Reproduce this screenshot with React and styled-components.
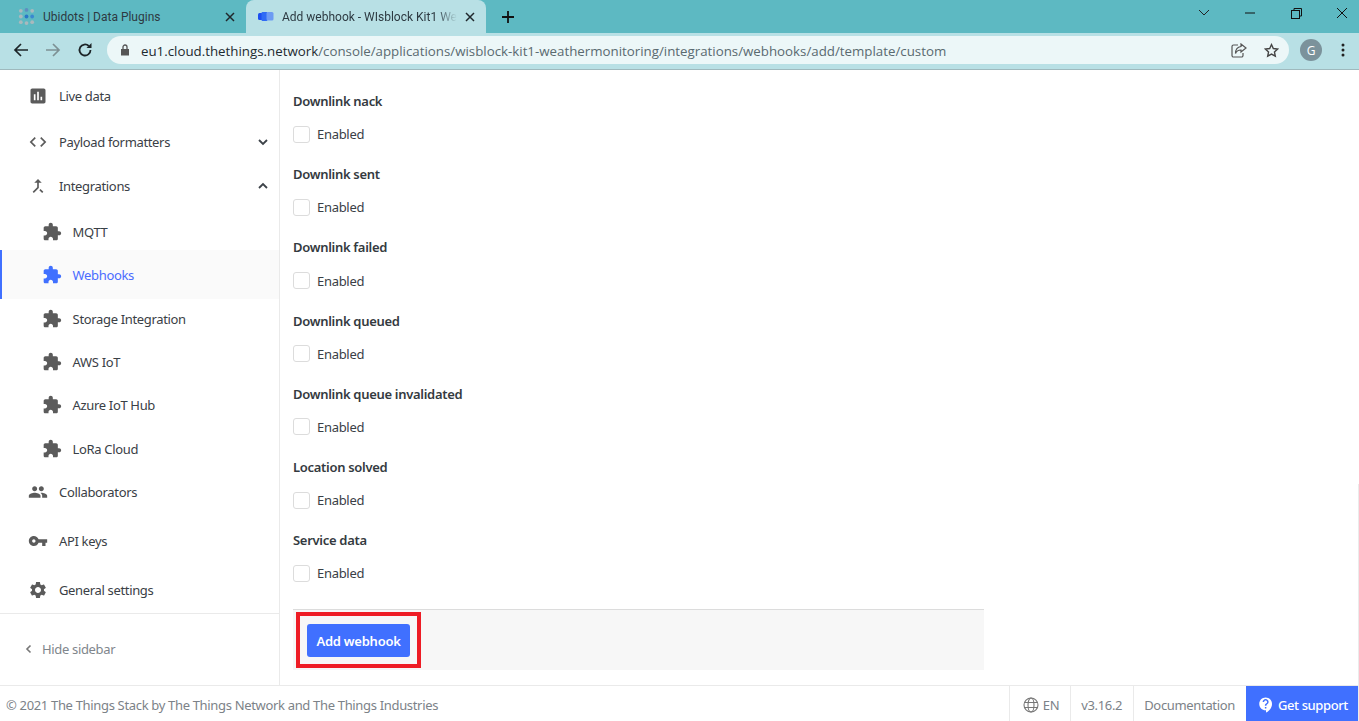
import React from 'react';
import styled, { createGlobalStyle } from 'styled-components';

const Global = createGlobalStyle`
  html, body { margin: 0; padding: 0; background: #fff; overflow: hidden; }
  * { box-sizing: border-box; }
`;
const UI = `"Source Sans Pro", "Noto Sans", sans-serif`;
const Page = styled.div`position:relative;width:1359px;height:721px;display:flex;flex-direction:column;overflow:hidden;font-family:${UI};`;
const ScrollSliver = styled.div`position:absolute;right:0;top:484px;bottom:0;width:1px;background:#ebebeb;`;

const TabStrip = styled.div`height:33px;background:#5db9c2;display:flex;align-items:stretch;flex:none;font-family:Roboto,sans-serif;`;
const Tab = styled.div`
  width:${p=>p.$w}px;margin-left:${p=>p.$ml||0}px;display:flex;align-items:center;padding:0 11px 0 ${p=>p.$pl}px;gap:8px;
  background:${p=>p.$active?'#b8e0e5':'transparent'};border-radius:8px 8px 0 0;font-size:12px;color:#2d3a42;
`;
const TabTitle = styled.span`flex:1;white-space:nowrap;overflow:hidden;${p=>p.$fade&&'mask-image:linear-gradient(90deg,#000 88%,transparent 100%);'}`;
const NewTab = styled.div`width:44px;display:flex;align-items:center;justify-content:center;`;
const Spacer = styled.div`flex:1;`;
const WinBtn = styled.div`width:${p=>p.$w||46}px;margin-left:${p=>p.$ml||0}px;display:flex;align-items:center;justify-content:center;padding-bottom:7px;`;

const Toolbar = styled.div`height:37px;background:#b8e0e5;border-bottom:1px solid #9fb9bd;display:flex;align-items:center;flex:none;padding:0 0 2px 0;`;
const NavBtn = styled.div`width:32px;display:flex;justify-content:center;align-items:center;margin-left:${p=>p.$ml||0}px;`;
const Omnibox = styled.div`width:1182px;height:28px;margin-left:6px;border-radius:14px;background:#ecf7f8;display:flex;align-items:center;padding:0 10px 0 13px;`;
const UrlText = styled.span`flex:1;margin-left:11px;padding-top:1px;font:13.31px "Open Sans",sans-serif;color:#5a6a70;white-space:nowrap;b{font-weight:400;color:#1d2a30;}`;
const OmniIcon = styled.div`display:flex;margin-left:${p=>p.$ml||0}px;`;
const Avatar = styled.div`width:22px;height:22px;border-radius:50%;background:#7b929b;color:#fff;font:12px "Open Sans",sans-serif;display:flex;align-items:center;justify-content:center;margin-left:11px;`;
const Kebab = styled.div`margin-left:19px;display:flex;`;

const Body = styled.div`flex:1;display:flex;min-height:0;`;
const Sidebar = styled.nav`width:280px;flex:none;border-right:1px solid #eaeaea;display:flex;flex-direction:column;padding-top:2px;`;
const Item = styled.div`
  height:${p=>p.$h}px;display:flex;align-items:center;padding:0 9px 0 ${p=>p.$sub?42:28}px;
  font-size:13px;letter-spacing:-.34px;color:${p=>p.$active?'#4a6cff':'#3a4046'};
  background:${p=>p.$active?'#fafafa':'transparent'};
  border-left:${p=>p.$active?'2px solid #4070ff':'0'};
  ${p=>p.$active&&'padding-left:40px;'}
  margin-top:${p=>p.$mt||0}px;
`;
const ItemIcon = styled.svg`width:${p=>p.$s||20}px;height:${p=>p.$s||20}px;flex:none;fill:${p=>p.$c||'#5b5b5b'};margin-right:${p=>p.$mr??10.6}px;`;
const Caret = styled.svg`margin-left:auto;width:14px;height:14px;fill:none;stroke:#3c4248;stroke-width:1.8;`;
const SideFoot = styled.div`margin-top:4px;border-top:1px solid #eaeaea;height:70px;display:flex;align-items:center;padding-left:24px;gap:9px;color:#80868c;font-size:13px;letter-spacing:-.34px;`;

const Main = styled.main`flex:1;padding:0 0 0 13px;min-width:0;`;
const Form = styled.div`width:691px;padding-top:19px;`;
const Group = styled.div`height:${p=>p.$h||73.2}px;color:#3a4046;font-size:13px;letter-spacing:-.3px;`;
const GroupLabel = styled.div`height:24px;line-height:24px;font-weight:600;color:#343a40;`;
const Check = styled.label`display:flex;align-items:center;gap:7px;margin-top:12.2px;height:18px;`;
const Box = styled.span`width:17px;height:17px;border:1px solid #dcdcdc;border-radius:3px;background:#fff;`;
const SubmitBar = styled.div`height:61px;background:#f7f7f7;border-top:1px solid #dcdcdc;padding:2px 0 0 3px;`;
const Annotation = styled.div`display:inline-block;border:4px solid #ee1c25;padding:8px 7px 7px;`;
const Button = styled.button`display:block;width:103px;height:33px;background:#4070ff;color:#fff;border:0;border-radius:3px;font:600 13px ${UI};letter-spacing:-.25px;padding:2px 0 0;`;

const Footer = styled.footer`height:36px;flex:none;border-top:1px solid #eaeaea;display:flex;align-items:stretch;color:#7c8288;font-size:13px;letter-spacing:-.33px;`;
const Copy = styled.div`flex:1;display:flex;align-items:center;padding:2px 0 0 6px;`;
const FootCell = styled.div`display:flex;align-items:center;gap:4px;padding:2px ${p=>p.$pr||10}px 0 ${p=>p.$pl||10}px;border-left:1px solid #eaeaea;`;
const Support = styled.div`width:113px;background:#4070ff;color:#fff;display:flex;align-items:center;padding:2px 0 0 11px;gap:3px;font-weight:500;white-space:nowrap;letter-spacing:-.4px;`;

const P = {
  live:'M19 3H5c-1.1 0-2 .9-2 2v14c0 1.1.9 2 2 2h14c1.1 0 2-.9 2-2V5c0-1.1-.9-2-2-2zM9 17H7v-7h2v7zm4 0h-2V7h2v10zm4 0h-2v-4h2v4z',
  code:'M9.4 16.6L4.8 12l4.6-4.6L8 6l-6 6 6 6 1.4-1.4zm5.2 0l4.6-4.6-4.6-4.6L16 6l6 6-6 6-1.4-1.4z',
  merge:'M17 20.41L18.41 19 15 15.59 13.59 17 17 20.41zM7.5 8H11v5.59L5.59 19 7 20.41l6-6V8h3.5L12 3.5 7.5 8z',
  ext:'M20.5 11H19V7c0-1.1-.9-2-2-2h-4V3.5C13 2.12 11.88 1 10.5 1S8 2.12 8 3.5V5H4c-1.1 0-1.99.9-1.99 2v3.8H3.5c1.49 0 2.7 1.21 2.7 2.7s-1.21 2.7-2.7 2.7H2V20c0 1.1.9 2 2 2h3.8v-1.5c0-1.49 1.21-2.7 2.7-2.7 1.49 0 2.7 1.21 2.7 2.7V22H17c1.1 0 2-.9 2-2v-4h1.5c1.38 0 2.5-1.12 2.5-2.5S21.88 11 20.5 11z',
  group:'M16 11c1.66 0 2.99-1.34 2.99-3S17.66 5 16 5c-1.66 0-3 1.34-3 3s1.34 3 3 3zm-8 0c1.66 0 2.99-1.34 2.99-3S9.66 5 8 5C6.34 5 5 6.34 5 8s1.34 3 3 3zm0 2c-2.33 0-7 1.17-7 3.5V19h14v-2.5c0-2.33-4.67-3.5-7-3.5zm8 0c-.29 0-.62.02-.97.05 1.16.84 1.97 1.97 1.97 3.45V19h6v-2.5c0-2.33-4.67-3.5-7-3.5z',
  key:'M12.65 10C11.83 7.67 9.61 6 7 6c-3.31 0-6 2.69-6 6s2.69 6 6 6c2.61 0 4.83-1.67 5.65-4H17v4h4v-4h2v-4H12.65zM7 14c-1.1 0-2-.9-2-2s.9-2 2-2 2 .9 2 2-.9 2-2 2z',
  gear:'M19.14 12.94c.04-.3.06-.61.06-.94 0-.32-.02-.64-.07-.94l2.03-1.58c.18-.14.23-.41.12-.61l-1.92-3.32c-.12-.22-.37-.29-.59-.22l-2.39.96c-.5-.38-1.03-.7-1.62-.94l-.36-2.54c-.04-.24-.24-.41-.48-.41h-3.84c-.24 0-.43.17-.47.41l-.36 2.54c-.59.24-1.13.57-1.62.94l-2.39-.96c-.22-.08-.47 0-.59.22L2.74 8.87c-.12.21-.08.47.12.61l2.03 1.58c-.05.3-.09.63-.09.94s.02.64.07.94l-2.03 1.58c-.18.14-.23.41-.12.61l1.92 3.32c.12.22.37.29.59.22l2.39-.96c.5.38 1.03.7 1.62.94l.36 2.54c.05.24.24.41.48.41h3.84c.24 0 .44-.17.47-.41l.36-2.54c.59-.24 1.13-.56 1.62-.94l2.39.96c.22.08.47 0 .59-.22l1.92-3.32c.12-.22.07-.47-.12-.61l-2.01-1.58zM12 15.6c-1.98 0-3.6-1.62-3.6-3.6s1.62-3.6 3.6-3.6 3.6 1.62 3.6 3.6-1.62 3.6-3.6 3.6z',
  help:'M11.5 2C6.81 2 3 5.81 3 10.5S6.81 19 11.5 19h.5v3c4.86-2.34 8-7 8-11.5C20 5.81 16.19 2 11.5 2zm1 14.5h-2v-2h2v2zm0-3.5h-2c0-3.25 3-3 3-5 0-1.1-.9-2-2-2s-2 .9-2 2h-2c0-2.21 1.79-4 4-4s4 1.79 4 4c0 2.5-3 2.75-3 5z',
};
const Icon = ({d,...r}) => <ItemIcon viewBox="0 0 24 24" {...r}><path d={d}/></ItemIcon>;
const Chev = ({up}) => <Caret viewBox="0 0 14 14"><path d={up?'M3 9l4-4 4 4':'M3 5l4 4 4-4'}/></Caret>;
const X = () => <svg width="10" height="10" viewBox="0 0 10 10" style={{flex:'none'}}><path d="M1 1l8 8M9 1l-8 8" stroke="#20282c" strokeWidth="1.5"/></svg>;

const sideTop = [
  {k:'Live data',d:P.live,h:48},
  {k:'Payload formatters',d:P.code,h:44,caret:'down'},
  {k:'Integrations',d:P.merge,h:44,caret:'up'},
];
const subs = [
  {k:'MQTT',h:36,mt:6},{k:'Webhooks',h:49,active:true},{k:'Storage Integration',h:40},{k:'AWS IoT',h:46},{k:'Azure IoT Hub',h:40},{k:'LoRa Cloud',h:48},
];
const sideBottom = [{k:'Collaborators',d:P.group,h:38},{k:'API keys',d:P.key,h:60},{k:'General settings',d:P.gear,h:38}];
const groups = [['Downlink nack'],['Downlink sent'],['Downlink failed'],['Downlink queued'],['Downlink queue invalidated'],['Location solved'],['Service data',80.8]];

export default function App(){
  return <Page><Global/>
    <TabStrip>
      <Tab $w={246} $pl={18}>
        <svg width="17" height="17" viewBox="0 0 18 18" style={{flex:'none'}}>
          {[[3,3,'#a9b9bd'],[9,2,'#5d8fc0'],[15,3,'#a9b9bd'],[3,9,'#a9b9bd'],[9,9,'#2a78c8'],[15,9,'#3a88d0'],[3,15,'#a9b9bd'],[9,16,'#a9b9bd'],[15,15,'#a9b9bd']].map(([x,y,c],i)=><circle key={i} cx={x} cy={y} r="2" fill={c}/>)}
        </svg>
        <TabTitle>Ubidots | Data Plugins</TabTitle><X/>
      </Tab>
      <Tab $w={240} $pl={12} $active>
        <svg width="16" height="9" viewBox="0 0 16 9" style={{flex:'none'}}>
          <rect x="0" y="1" width="5" height="7" rx="1.500" fill="#1c4ff0"/><rect x="3.500" y="0" width="6" height="9" rx="1" fill="#2f6bf5"/><rect x="8.500" y="0" width="7" height="8.500" rx="1.500" fill="#6d9bf3"/>
        </svg>
        <TabTitle $fade>Add webhook - WIsblock Kit1 Weather Monitoring</TabTitle><X/>
      </Tab>
      <NewTab><svg width="14" height="14" viewBox="0 0 14 14"><path d="M7 1v12M1 7h12" stroke="#111" strokeWidth="1.8"/></svg></NewTab>
      <Spacer/>
      <WinBtn><svg width="12" height="8" viewBox="0 0 12 8"><path d="M1 1l5 5 5-5" fill="none" stroke="#222" strokeWidth="1"/></svg></WinBtn>
      <WinBtn><svg width="12" height="2" viewBox="0 0 12 2"><path d="M1 1h10" stroke="#111" strokeWidth="1"/></svg></WinBtn>
      <WinBtn><svg width="11" height="11" viewBox="0 0 11 11" fill="none" stroke="#111"><rect x=".5" y="2.5" width="8" height="8"/><path d="M3 2.500V.5h7.500v7.500H8.500"/></svg></WinBtn>
      <WinBtn $w={34} $ml={6}><svg width="12" height="12" viewBox="0 0 12 12"><path d="M1 1l10 10M11 1L1 11" stroke="#111" strokeWidth="1"/></svg></WinBtn>
    </TabStrip>
    <Toolbar>
      <NavBtn $ml={5}><svg width="16" height="16" viewBox="0 0 16 16"><path d="M15 8H2M8 2L2 8l6 6" fill="none" stroke="#1d2528" strokeWidth="1.7"/></svg></NavBtn>
      <NavBtn><svg width="16" height="16" viewBox="0 0 16 16"><path d="M1 8h13M8 2l6 6-6 6" fill="none" stroke="#7d9094" strokeWidth="1.7"/></svg></NavBtn>
      <NavBtn><svg width="16" height="16" viewBox="0 0 16 16"><path d="M13.500 8a5.500 5.500 0 1 1-1.700-4" fill="none" stroke="#1d2528" strokeWidth="1.8"/><path d="M14.500 1v5h-5z" fill="#1d2528"/></svg></NavBtn>
      <Omnibox>
        <svg width="10" height="12" viewBox="0 0 10 12" style={{flex:'none'}}><path d="M1 5h8v6.500H1z" fill="#555"/><path d="M3 5V3a2 2 0 0 1 4 0v2" fill="none" stroke="#555" strokeWidth="1.300"/></svg>
        <UrlText><b>eu1.cloud.thethings.network</b>/console/applications/wisblock-kit1-weathermonitoring/integrations/webhooks/add/template/custom</UrlText>
        <OmniIcon><svg width="16" height="15" viewBox="0 0 16 15" fill="none" stroke="#555" strokeWidth="1.200"><path d="M7 2H2.500A1.500 1.500 0 0 0 1 3.500v9A1.500 1.500 0 0 0 2.500 14h8a1.500 1.500 0 0 0 1.500-1.500V10"/><path d="M10 1l5 4-5 4V7C7 7 5.500 8 4.500 10.500 4.500 7 6.500 4 10 3.500z"/></svg></OmniIcon>
        <OmniIcon $ml={17}><svg width="15" height="15" viewBox="0 0 24 24" fill="none" stroke="#444" strokeWidth="2.200"><path d="M12 2.500l2.900 6.300 6.900.8-5.100 4.700 1.400 6.800-6.100-3.400-6.100 3.400 1.400-6.800-5.100-4.700 6.900-.8z"/></svg></OmniIcon>
      </Omnibox>
      <Avatar>G</Avatar>
      <Kebab><svg width="4" height="14" viewBox="0 0 4 14" fill="#222"><circle cx="2" cy="2" r="1.500"/><circle cx="2" cy="7" r="1.500"/><circle cx="2" cy="12" r="1.500"/></svg></Kebab>
    </Toolbar>
    <Body>
      <Sidebar>
        {sideTop.map(i=><Item key={i.k} $h={i.h}><Icon d={i.d} $mr={11}/>{i.k}{i.caret&&<Chev up={i.caret==='up'}/>}</Item>)}
        {subs.map(i=><Item key={i.k} $sub $h={i.h} $mt={i.mt} $active={i.active}><Icon d={P.ext} $c={i.active?'#4070ff':'#5b5b5b'}/>{i.k}</Item>)}
        {sideBottom.map(i=><Item key={i.k} $h={i.h}><Icon d={i.d} $mr={11}/>{i.k}</Item>)}
        <SideFoot>
          <svg width="9" height="10" viewBox="0 0 9 10"><path d="M6.500 1.500L3 5l3.500 3.500" fill="none" stroke="#777" strokeWidth="1.600"/></svg>
          Hide sidebar
        </SideFoot>
      </Sidebar>
      <Main>
        <Form>
          {groups.map(([l,h])=><Group key={l} $h={h}><GroupLabel>{l}</GroupLabel><Check><Box/>Enabled</Check></Group>)}
          <SubmitBar><Annotation><Button>Add webhook</Button></Annotation></SubmitBar>
        </Form>
      </Main>
    </Body>
    <Footer>
      <Copy>© 2021 The Things Stack by The Things Network and The Things Industries</Copy>
      <FootCell $pl={13} $pr={11}>
        <svg width="16" height="16" viewBox="0 0 16 16" fill="none" stroke="#777" strokeWidth="1.100"><circle cx="8" cy="8" r="7"/><ellipse cx="8" cy="8" rx="3" ry="7"/><path d="M1.500 5.500h13M1.500 10.500h13"/></svg>
        EN
      </FootCell>
      <FootCell $pr={11}>v3.16.2</FootCell>
      <FootCell $pr={11}>Documentation</FootCell>
      <Support><ItemIcon viewBox="0 0 24 24" $s={18} $c="#fff" $mr={0}><path d={P.help}/></ItemIcon>Get support</Support>
    </Footer>
    <ScrollSliver/>
  </Page>;
}
